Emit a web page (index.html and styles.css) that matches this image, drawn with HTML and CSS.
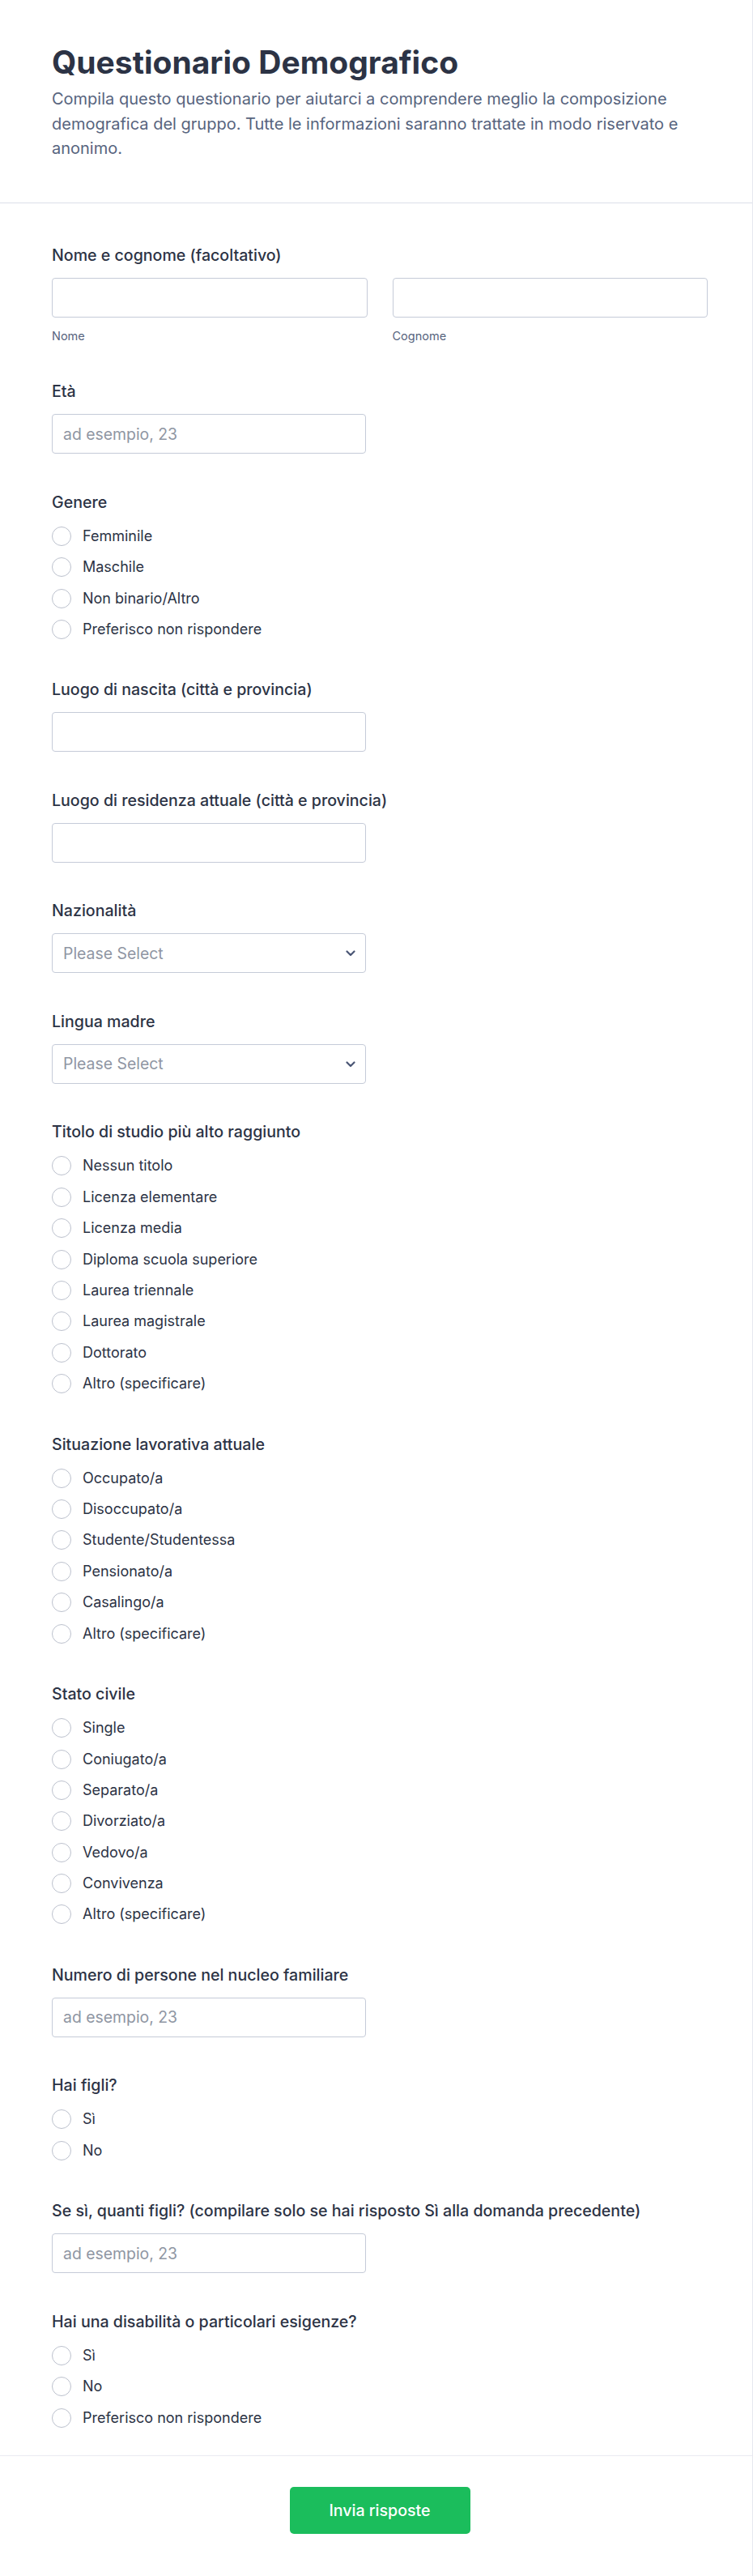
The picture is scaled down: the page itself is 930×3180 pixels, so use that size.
FILE: index.html
```html
<!DOCTYPE html>
<html lang="it">
<head>
<meta charset="utf-8">
<title>Questionario Demografico</title>
<link rel="stylesheet" href="styles.css">
</head>
<body>
<div class="page">
  <header class="header">
    <h1 class="title">Questionario Demografico</h1>
    <p class="desc">Compila questo questionario per aiutarci a comprendere meglio la composizione demografica del gruppo. Tutte le informazioni saranno trattate in modo riservato e anonimo.</p>
  </header>

  <form class="form">
    <div class="field">
      <label class="label">Nome e cognome (facoltativo)</label>
      <div class="two-col">
        <div class="col">
          <input class="input" type="text">
          <span class="sublabel">Nome</span>
        </div>
        <div class="col">
          <input class="input" type="text">
          <span class="sublabel">Cognome</span>
        </div>
      </div>
    </div>

    <div class="field">
      <label class="label">Età</label>
      <input class="input short" type="text" placeholder="ad esempio, 23">
    </div>

    <div class="field radio-field">
      <label class="label">Genere</label>
      <div class="options">
        <label class="option"><input type="radio" name="genere"><span>Femminile</span></label>
        <label class="option"><input type="radio" name="genere"><span>Maschile</span></label>
        <label class="option"><input type="radio" name="genere"><span>Non binario/Altro</span></label>
        <label class="option"><input type="radio" name="genere"><span>Preferisco non rispondere</span></label>
      </div>
    </div>

    <div class="field">
      <label class="label">Luogo di nascita (città e provincia)</label>
      <input class="input short" type="text">
    </div>

    <div class="field">
      <label class="label">Luogo di residenza attuale (città e provincia)</label>
      <input class="input short" type="text">
    </div>

    <div class="field">
      <label class="label">Nazionalità</label>
      <div class="select-wrap">
        <select class="input select"><option>Please Select</option></select>
        <svg class="chevron" width="12" height="8" viewBox="0 0 12 8"><path d="M1.5 1.5 L6 6 L10.5 1.5" fill="none" stroke="#4a5675" stroke-width="2.2" stroke-linecap="round" stroke-linejoin="round"/></svg>
      </div>
    </div>

    <div class="field">
      <label class="label">Lingua madre</label>
      <div class="select-wrap">
        <select class="input select"><option>Please Select</option></select>
        <svg class="chevron" width="12" height="8" viewBox="0 0 12 8"><path d="M1.5 1.5 L6 6 L10.5 1.5" fill="none" stroke="#4a5675" stroke-width="2.2" stroke-linecap="round" stroke-linejoin="round"/></svg>
      </div>
    </div>

    <div class="field radio-field">
      <label class="label">Titolo di studio più alto raggiunto</label>
      <div class="options">
        <label class="option"><input type="radio" name="titolo"><span>Nessun titolo</span></label>
        <label class="option"><input type="radio" name="titolo"><span>Licenza elementare</span></label>
        <label class="option"><input type="radio" name="titolo"><span>Licenza media</span></label>
        <label class="option"><input type="radio" name="titolo"><span>Diploma scuola superiore</span></label>
        <label class="option"><input type="radio" name="titolo"><span>Laurea triennale</span></label>
        <label class="option"><input type="radio" name="titolo"><span>Laurea magistrale</span></label>
        <label class="option"><input type="radio" name="titolo"><span>Dottorato</span></label>
        <label class="option"><input type="radio" name="titolo"><span>Altro (specificare)</span></label>
      </div>
    </div>

    <div class="field radio-field">
      <label class="label">Situazione lavorativa attuale</label>
      <div class="options">
        <label class="option"><input type="radio" name="lavoro"><span>Occupato/a</span></label>
        <label class="option"><input type="radio" name="lavoro"><span>Disoccupato/a</span></label>
        <label class="option"><input type="radio" name="lavoro"><span>Studente/Studentessa</span></label>
        <label class="option"><input type="radio" name="lavoro"><span>Pensionato/a</span></label>
        <label class="option"><input type="radio" name="lavoro"><span>Casalingo/a</span></label>
        <label class="option"><input type="radio" name="lavoro"><span>Altro (specificare)</span></label>
      </div>
    </div>

    <div class="field radio-field">
      <label class="label">Stato civile</label>
      <div class="options">
        <label class="option"><input type="radio" name="civile"><span>Single</span></label>
        <label class="option"><input type="radio" name="civile"><span>Coniugato/a</span></label>
        <label class="option"><input type="radio" name="civile"><span>Separato/a</span></label>
        <label class="option"><input type="radio" name="civile"><span>Divorziato/a</span></label>
        <label class="option"><input type="radio" name="civile"><span>Vedovo/a</span></label>
        <label class="option"><input type="radio" name="civile"><span>Convivenza</span></label>
        <label class="option"><input type="radio" name="civile"><span>Altro (specificare)</span></label>
      </div>
    </div>

    <div class="field">
      <label class="label">Numero di persone nel nucleo familiare</label>
      <input class="input short" type="text" placeholder="ad esempio, 23">
    </div>

    <div class="field radio-field">
      <label class="label">Hai figli?</label>
      <div class="options">
        <label class="option"><input type="radio" name="figli"><span>Sì</span></label>
        <label class="option"><input type="radio" name="figli"><span>No</span></label>
      </div>
    </div>

    <div class="field">
      <label class="label">Se sì, quanti figli? (compilare solo se hai risposto Sì alla domanda precedente)</label>
      <input class="input short" type="text" placeholder="ad esempio, 23">
    </div>

    <div class="field radio-field">
      <label class="label">Hai una disabilità o particolari esigenze?</label>
      <div class="options">
        <label class="option"><input type="radio" name="disab"><span>Sì</span></label>
        <label class="option"><input type="radio" name="disab"><span>No</span></label>
        <label class="option"><input type="radio" name="disab"><span>Preferisco non rispondere</span></label>
      </div>
    </div>
  </form>

  <footer class="footer">
    <button class="submit" type="button">Invia risposte</button>
  </footer>
</div>
</body>
</html>
```
FILE: styles.css
```css
* { box-sizing: border-box; }

html, body {
  margin: 0;
  padding: 0;
  background: #ffffff;
}

body {
  font-family: Inter, "Noto Sans", "Liberation Sans", sans-serif;
  color: #2c3345;
}

.page {
  width: 930px;
  min-height: 3180px;
  border-right: 1px solid #e6e8ef;
  background: #ffffff;
}

.header {
  padding: 53px 55px 51px 64px;
  border-bottom: 1px solid #dcdfe8;
}

.title {
  margin: 0;
  font-size: 39px;
  line-height: 47px;
  font-weight: 700;
  color: #2c3345;
}

.desc {
  margin: 7px 0 0;
  font-size: 20px;
  line-height: 30.6px;
  color: #57647e;
}

.form {
  padding: 52px 55px 31px 64px;
  border-bottom: 1px solid #e9eaf1;
}

.field {
  display: flex;
  flex-direction: column;
}

.field + .field {
  margin-top: 47.5px;
}

.label {
  display: block;
  font-size: 19.6px;
  line-height: 24px;
  font-weight: 500;
  color: #2c3345;
  margin-bottom: 16px;
}

.two-col {
  display: grid;
  grid-template-columns: 1fr 1fr;
  column-gap: 31px;
}

.col {
  display: flex;
  flex-direction: column;
}

.input {
  display: block;
  width: 100%;
  height: 49px;
  border: 1px solid #c5cbd8;
  border-radius: 4px;
  background: #ffffff;
  padding: 0 13px;
  font-family: Inter, "Noto Sans", "Liberation Sans", sans-serif;
  font-size: 19.4px;
  color: #2c3345;
  outline: none;
}

.input::placeholder {
  color: #8f96a3;
  opacity: 1;
}

.short {
  width: 388px;
}

.sublabel {
  margin-top: 14px;
  font-size: 14.5px;
  line-height: 18px;
  color: #57647e;
}

.select-wrap {
  position: relative;
  width: 388px;
}

.select {
  -webkit-appearance: none;
  appearance: none;
  color: #8f96a3;
  padding-right: 36px;
}

.chevron {
  position: absolute;
  right: 13px;
  top: 21px;
  pointer-events: none;
}

.radio-field {
  padding-bottom: 3px;
}

.radio-field .label {
  margin-bottom: 18px;
}

.options {
  display: flex;
  flex-direction: column;
  gap: 14.4px;
}

.option {
  display: flex;
  align-items: center;
  gap: 14px;
  height: 24px;
  font-size: 18px;
  line-height: 24px;
  color: #2c3345;
}

.option input {
  -webkit-appearance: none;
  appearance: none;
  width: 24px;
  height: 24px;
  margin: 0;
  border: 1.5px solid #bcc1cd;
  border-radius: 50%;
  background: #ffffff;
  flex: 0 0 24px;
}

.footer {
  display: flex;
  justify-content: center;
  padding: 38px 55px 51px 64px;
}

.submit {
  width: 223px;
  height: 58px;
  border: none;
  border-radius: 5px;
  background: #1bbd5c;
  color: #ffffff;
  font-family: Inter, "Noto Sans", "Liberation Sans", sans-serif;
  font-size: 19.6px;
  font-weight: 500;
  cursor: pointer;
}
```
